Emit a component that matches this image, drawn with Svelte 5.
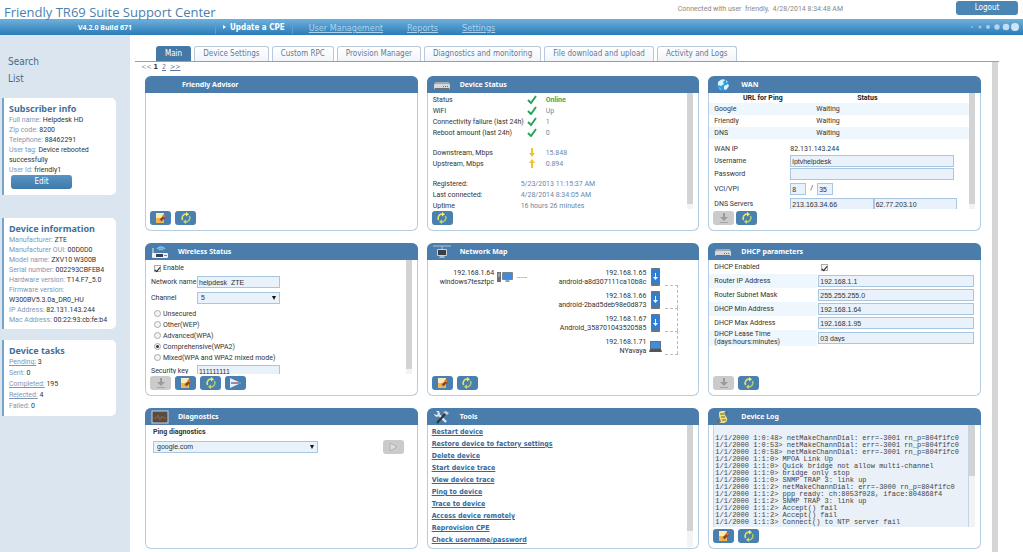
<script lang="ts">
	const nav = ['User Management', 'Reports', 'Settings'];
	const tabs = [
		'Main',
		'Device Settings',
		'Custom RPC',
		'Provision Manager',
		'Diagnostics and monitoring',
		'File download and upload',
		'Activity and Logs'
	];
	let activeTab = $state('Main');

	const subscriber = [
		['Full name', 'Helpdesk HD'],
		['Zip code', '8200'],
		['Telephone', '88462291'],
		['User tag', 'Device rebooted successfully'],
		['User Id', 'friendly1']
	];
	const deviceInfo = [
		['Manufacturer', 'ZTE'],
		['Manufacturer OUI', '00D0D0'],
		['Model name', 'ZXV10 W300B'],
		['Serial number', '002293CBFEB4'],
		['Hardware version', 'T14.F7_5.0'],
		['Firmware version', 'W300BV5.3.0a_DR0_HU'],
		['IP Address', '82.131.143.244'],
		['Mac Address', '00:22:93:cb:fe:b4']
	];
	const tasks = [
		{ name: 'Pending', count: 3, link: true },
		{ name: 'Sent', count: 0, link: false },
		{ name: 'Completed', count: 195, link: true },
		{ name: 'Rejected', count: 4, link: true },
		{ name: 'Failed', count: 0, link: false }
	];

	const checks = [
		['Status', 'Online'],
		['WiFi', 'Up'],
		['Connectivity failure (last 24h)', '1'],
		['Reboot amount (last 24h)', '0']
	];
	const times = [
		['Registered:', '5/23/2013 11:15:37 AM'],
		['Last connected:', '4/28/2014 8:34:05 AM'],
		['Uptime', '16 hours 26 minutes']
	];
	const pings = ['Google', 'Friendly', 'DNS'];

	const security = [
		'Unsecured',
		'Other(WEP)',
		'Advanced(WPA)',
		'Comprehensive(WPA2)',
		'Mixed(WPA and WPA2 mixed mode)'
	];
	let mode = $state('Comprehensive(WPA2)');

	const hosts = [
		{ ip: '192.168.1.65', name: 'android-a8d307111ca10b8c', type: 'phone' },
		{ ip: '192.168.1.66', name: 'android-2bad5deb98e0d873', type: 'phone' },
		{ ip: '192.168.1.67', name: 'Android_358701043520585', type: 'phone' },
		{ ip: '192.168.1.71', name: 'NYavaya', type: 'laptop' }
	];

	const dhcp = [
		['Router IP Address', '192.168.1.1'],
		['Router Subnet Mask', '255.255.255.0'],
		['DHCP Min Address', '192.168.1.64'],
		['DHCP Max Address', '192.168.1.95'],
		['DHCP Lease Time (days:hours:minutes)', '03 days']
	];

	const tools = [
		'Restart device',
		'Restore device to factory settings',
		'Delete device',
		'Start device trace',
		'View device trace',
		'Ping to device',
		'Trace to device',
		'Access device remotely',
		'Reprovision CPE',
		'Check username/password'
	];

	const log = `1/1/2000 1:0:48> netMakeChannDial: err=-3001 rn_p=804f1fc0
1/1/2000 1:0:53> netMakeChannDial: err=-3001 rn_p=804f1fc0
1/1/2000 1:0:58> netMakeChannDial: err=-3001 rn_p=804f1fc0
1/1/2000 1:1:0> MPOA Link Up
1/1/2000 1:1:0> Quick bridge not allow multi-channel
1/1/2000 1:1:0> bridge only stop
1/1/2000 1:1:0> SNMP TRAP 3: link up
1/1/2000 1:1:2> netMakeChannDial: err=-3000 rn_p=804f1fc0
1/1/2000 1:1:2> ppp ready: ch:8053f028, iface:804868f4
1/1/2000 1:1:2> SNMP TRAP 3: link up
1/1/2000 1:1:2> Accept() fail
1/1/2000 1:1:2> Accept() fail
1/1/2000 1:1:3> Connect() to NTP server fail`;
</script>

{#snippet router()}
	<svg width="18" height="14" viewBox="0 0 18 14" aria-hidden="true">
		<path d="M2 4h14l1 3H1z" fill="#a4a9af" />
		<rect x="1" y="6" width="16" height="5" rx="1" fill="#d5d8dc" />
		<rect x="2" y="10" width="14" height="1" fill="#6a7079" />
		<path d="M10 8.500h1M12 8.500h1" stroke="#6a7079" />
		<rect x="14" y="8" width="1" height="1" fill="#c0504d" />
	</svg>
{/snippet}

{#snippet edit()}
	<button class="tool" aria-label="Edit">
		<svg width="13" height="12" viewBox="0 0 13 12">
			<path d="M2 1h8v10H2z" fill="#fce9b5" />
			<path d="M2 6h8v5H2z" fill="#f5b54a" />
			<path d="M5 10l1-3 4-4 2 2-4 4z" fill="#8a4a22" />
			<path d="M9 3l2 2" stroke="#e8742c" stroke-width="2" />
			<path d="M5 10l1-2 1 1z" fill="#fff" />
		</svg>
	</button>
{/snippet}

{#snippet refresh()}
	<button class="tool" aria-label="Refresh">
		<svg width="12" height="12" viewBox="0 0 12 12" fill="none" stroke-width="1.600">
			<path d="M2.600 8A3.900 3.900 0 0 1 6.500 2.200" stroke="#e8e35a" />
			<path d="M9.400 4A3.900 3.900 0 0 1 5.500 9.800" stroke="#a9cf6a" />
			<path d="M6 0l3 2.200L6 4.400z" fill="#f1ec7a" />
			<path d="M6 7.600L3 9.800 6 12z" fill="#c5dc73" />
		</svg>
	</button>
{/snippet}

{#snippet save()}
	<button class="tool off" aria-label="Save" disabled>
		<svg width="12" height="12" viewBox="0 0 12 12">
			<path d="M5 1h2v4h3L6 9 2 5h3z" fill="#9b9b9b" />
			<path d="M2 10.500h8" stroke="#a5a5a5" />
		</svg>
	</button>
{/snippet}

<div class="app">
	<header>
		<div class="top">
			<h1>Friendly TR69 Suite Support Center</h1>
			<span class="who">Connected with user &nbsp;friendly, &nbsp;4/28/2014 8:34:48 AM</span>
			<button class="logout">Logout</button>
		</div>
		<div class="bar">
			<span class="version">V4.2.0 Build 671</span>
			<nav>
				<a class="current" href="#update">Update a CPE</a>
				{#each nav as item}
					<a href="#nav">{item}</a>
				{/each}
			</nav>
			<svg class="dots" width="54" height="12" viewBox="0 0 54 12" fill="#cfe5f5" aria-hidden="true">
				<circle cx="5" cy="6" r="1" opacity=".5" />
				<circle cx="13" cy="6" r="1.5" opacity=".6" />
				<circle cx="21" cy="6" r="2" opacity=".7" />
				<circle cx="30" cy="6" r="2.7" opacity=".8" />
				<circle cx="39" cy="6" r="3.3" opacity=".9" />
				<circle cx="48" cy="6" r="4" />
			</svg>
		</div>
	</header>

	<div class="page">
		<aside>
			<a class="big" href="#search">Search</a>
			<a class="big" href="#list">List</a>

			<section class="card subscriber">
				<h2>Subscriber info</h2>
				{#each subscriber as [name, value]}
					<p><span>{name}:</span> {value}</p>
				{/each}
				<button class="edit">Edit</button>
			</section>

			<section class="card info">
				<h2>Device information</h2>
				{#each deviceInfo as [name, value]}
					<p><span>{name}:</span> {value}</p>
				{/each}
			</section>

			<section class="card tasks">
				<h2>Device tasks</h2>
				{#each tasks as task}
					<p>
						{#if task.link}<a href="#tasks">{task.name}:</a>{:else}<span>{task.name}:</span>{/if}
						{task.count}
					</p>
				{/each}
			</section>
		</aside>

		<main>
			<div class="tabs">
				{#each tabs as tab}
					<button class:active={tab === activeTab} onclick={() => (activeTab = tab)}>{tab}</button>
				{/each}
			</div>

			<div class="content">
				<div class="left">
					<div class="pager">
						<span>&lt;&lt;</span> <b>1</b> <a href="#p2">2</a> <a href="#next">&gt;&gt;</a>
					</div>

					<div class="grid">
						<section class="panel">
							<h3 class="plain">Friendly Advisor</h3>
							<div class="body"></div>
							<div class="actions">{@render edit()}{@render refresh()}</div>
						</section>

						<section class="panel">
							<h3>{@render router()}Device Status</h3>
							<div class="body">
								<div class="scroll">
									<table class="status">
										<tbody>
											{#each checks as [name, value]}
												<tr>
													<th>{name}</th>
													<td class="mark">
														<svg width="10" height="9" viewBox="0 0 10 9">
															<path d="M1 5l3 3L9 1" fill="none" stroke="#27a557" stroke-width="2" />
														</svg>
													</td>
													<td class:online={value === 'Online'}>{value}</td>
												</tr>
											{/each}
										</tbody>
										<tbody>
											<tr>
												<th>Downstream, Mbps</th>
												<td class="mark">
													<svg width="10" height="9" viewBox="0 0 10 9">
														<path d="M4 0h2v5h2L5 9 2 5h2z" fill="#efc52e" />
													</svg>
												</td>
												<td>15.848</td>
											</tr>
											<tr>
												<th>Upstream, Mbps</th>
												<td class="mark">
													<svg width="10" height="9" viewBox="0 0 10 9">
														<path d="M4 9h2V4h2L5 0 2 4h2z" fill="#efc52e" />
													</svg>
												</td>
												<td>0.894</td>
											</tr>
										</tbody>
										<tbody>
											{#each times as [name, value]}
												<tr><th>{name}</th><td colspan="2">{value}</td></tr>
											{/each}
										</tbody>
									</table>
								</div>
								<div class="rail"><i></i></div>
							</div>
							<div class="actions">{@render refresh()}</div>
						</section>

						<section class="panel">
							<h3>
								<svg width="18" height="14" viewBox="0 0 18 14" aria-hidden="true">
									<circle cx="9" cy="7" r="6" fill="#2d9fe0" />
									<path d="M4 4q4-4 7-2L9 4l1 2-3 2-3-1zM10 8l4-2 1 2-3 4-2-1z" fill="#d9f3fb" />
									<path d="M12 2l2 2-2 1zM5 9l2 2-1 1z" fill="#8fd3ee" />
								</svg>WAN
							</h3>
							<div class="body">
								<div class="scroll">
									<table class="pings">
										<thead>
											<tr><th>URL for Ping</th><th>Status</th><th></th></tr>
										</thead>
										<tbody>
											{#each pings as host}
												<tr><td>{host}</td><td>Waiting</td><td></td></tr>
											{/each}
										</tbody>
									</table>
									<div class="form wan">
										<span>WAN IP</span><span class="ip">82.131.143.244</span>
										<label for="user">Username</label><input id="user" value="iptvhelpdesk" />
										<label for="pass">Password</label><input id="pass" />
										<label for="vci">VCI/VPI</label>
										<div class="pair vci">
											<input id="vci" value="8" /><span>/</span><input aria-label="VPI" value="35" />
										</div>
										<label for="dns">DNS Servers</label>
										<div class="pair dns">
											<input id="dns" value="213.163.34.66" /><input aria-label="Second DNS server" value="62.77.203.10" />
										</div>
									</div>
								</div>
								<div class="rail"><i></i></div>
							</div>
							<div class="actions tight">{@render save()}{@render refresh()}</div>
						</section>

						<section class="panel mid">
							<h3>
								<svg width="18" height="14" viewBox="0 0 18 14" aria-hidden="true">
									<path d="M2 3v6" stroke="#e8eef4" />
									<path d="M6 4q4-4 8 0M8 5q2-2 4 0" fill="none" stroke="#7cc6ef" stroke-width="1.4" />
									<rect x="1" y="8" width="16" height="5" rx="1" fill="#eef1f4" />
									<rect x="5" y="9" width="7" height="3" fill="#39424d" />
									<path d="M13 10.500h3" stroke="#7a8592" />
								</svg>Wireless Status
							</h3>
							<div class="body">
								<div class="scroll wifi">
									<label class="enable"><input type="checkbox" checked />Enable</label>
									<div class="line">
										<label for="ssid">Network name</label><input id="ssid" value="helpdesk_ZTE" />
									</div>
									<div class="line channel">
										<label for="channel">Channel</label>
										<div class="select"><select id="channel"><option>5</option></select></div>
									</div>
									<div class="radios">
										{#each security as item}
											<label><input type="radio" value={item} bind:group={mode} />{item}</label>
										{/each}
									</div>
									<div class="line">
										<label for="key">Security key</label><input id="key" value="111111111" />
									</div>
								</div>
								<div class="rail"><i></i></div>
							</div>
							<div class="actions">
								{@render save()}{@render edit()}{@render refresh()}
								<button class="tool" aria-label="Send">
									<svg width="13" height="12" viewBox="0 0 13 12">
										<path d="M1 1l11 5L1 11z" fill="#e9f1f8" />
										<path d="M2 6h3M8 6h3" stroke="#4a80b0" stroke-width="1.500" />
										<path d="M5 6h3" stroke="#c5484f" stroke-width="1.500" />
									</svg>
								</button>
							</div>
						</section>

						<section class="panel mid">
							<h3>
								<svg width="18" height="14" viewBox="0 0 18 14" aria-hidden="true">
									<path d="M0 1h18M9 1v3" stroke="#a9c3da" />
									<rect x="4" y="4" width="10" height="7" rx="1" fill="#c9d0d6" />
									<rect x="5" y="5" width="8" height="5" fill="#3b3f45" />
									<path d="M6 13h6l-1-2H7z" fill="#aeb6be" />
								</svg>Network Map
							</h3>
							<div class="body map">
								<div class="host">
									<p>192.168.1.64<br />windows7tesztpc</p>
									<svg width="17" height="17" viewBox="0 0 17 17">
										<rect x="0" y="4" width="4" height="10" fill="#6a717a" />
										<path d="M1 6h2M1 8h2" stroke="#c8ccd1" />
										<rect x="5" y="4" width="11" height="8" rx="1" fill="#7b858f" />
										<rect x="6" y="5" width="9" height="6" fill="#3f8be0" />
										<path d="M8 14h5l-1-2H9z" fill="#98a1aa" />
									</svg>
									<i></i>
								</div>
								<div class="hosts">
									{#each hosts as host}
										<div class="host">
											<p>{host.ip}<br />{host.name}</p>
											{#if host.type === 'phone'}
												<svg width="13" height="18" viewBox="0 0 13 18">
													<rect x="2" y="0" width="9" height="18" rx="1" fill="#69747f" />
													<rect x="3" y="2" width="7" height="13" fill="#2f7fd6" />
													<path d="M6 5h1v4h2l-2.500 3L4 9h2z" fill="#fff" />
												</svg>
											{:else}
												<svg width="13" height="18" viewBox="0 0 13 18">
													<rect x="1" y="4" width="11" height="8" fill="#68727c" />
													<rect x="2" y="5" width="9" height="6" fill="#3c8de4" />
													<path d="M0 15h13l-1-3H1z" fill="#4c5560" />
												</svg>
											{/if}
											<i></i>
										</div>
									{/each}
								</div>
							</div>
							<div class="actions">{@render edit()}{@render refresh()}</div>
						</section>

						<section class="panel mid">
							<h3>{@render router()}DHCP parameters</h3>
							<div class="body">
								<div class="dhcp">
									<div class="row first">
										<label for="dhcp-on">DHCP Enabled</label><input id="dhcp-on" type="checkbox" checked />
									</div>
									{#each dhcp as [name, value], i}
										<div class="row">
											<label for="dhcp-{i}">{name}</label><input id="dhcp-{i}" {value} />
										</div>
									{/each}
								</div>
							</div>
							<div class="actions">{@render save()}{@render refresh()}</div>
						</section>

						<section class="panel low">
							<h3>
								<svg width="18" height="14" viewBox="0 0 18 14" aria-hidden="true">
									<rect x="1" y="1" width="16" height="12" fill="#5a4a40" stroke="#c9d3dc" />
									<path d="M3 8h3l1-3 2 5 2-4 1 2h3" fill="none" stroke="#8f6750" />
								</svg>Diagnostics
							</h3>
							<div class="body diag">
								<label for="ping">Ping diagnostics</label>
								<div class="ping">
									<div class="select"><select id="ping"><option>google.com</option></select></div>
									<button class="tool off" aria-label="Run" disabled>
										<svg width="12" height="12" viewBox="0 0 12 12">
											<path d="M3 2l7 4-7 4z" fill="#dedede" stroke="#b2b2b2" />
										</svg>
									</button>
								</div>
							</div>
						</section>

						<section class="panel low">
							<h3>
								<svg width="18" height="14" viewBox="0 0 18 14" aria-hidden="true">
									<path d="M6 5l7 7" stroke="#dfe5ea" stroke-width="2.400" />
									<path d="M3 1l2 2-1 2-3-1a3 3 0 0 0 5 2l1-2-1-3z" fill="#dfe5ea" />
									<path d="M4 13l8-9" stroke="#2f3338" stroke-width="2" />
									<path d="M10 2l4 3 2-2-3-2z" fill="#c8ced4" />
								</svg>Tools
							</h3>
							<div class="body tall">
								<ul class="scroll">
									{#each tools as tool}
										<li><a href="#tools">{tool}</a></li>
									{/each}
								</ul>
								<div class="rail"><i></i></div>
							</div>
						</section>

						<section class="panel low">
							<h3>
								<svg width="18" height="14" viewBox="0 0 18 14" aria-hidden="true">
									<path d="M5 3q0-2 3-2h4q-3 1-1 4l2 3q1 4-3 5H5q3-1 1-4L5 6z" fill="#f3df7a" />
									<path d="M6 4h4M7 7h4M8 10h4M12 1q2 1 1 3M5 13q-2-1-1-3" fill="none" stroke="#6c6334" />
								</svg>Device Log
							</h3>
							<div class="body">
								<pre class="scroll">{log}</pre>
								<div class="rail log"><i></i></div>
							</div>
							<div class="actions">{@render edit()}{@render refresh()}</div>
						</section>
					</div>
				</div>
				<div class="pagebar"></div>
			</div>
		</main>
	</div>
</div>

<style>
	:global(body) {
		margin: 0;
		background: #fff;
	}

	.app {
		display: flex;
		flex-direction: column;
		height: 100vh;
		overflow: hidden;
		color: #333;
		font: 7px/10px Roboto, 'Liberation Sans', sans-serif;
	}

	.app :global(*) {
		box-sizing: border-box;
	}

	h1, h2, h3, p, ul, pre {
		margin: 0;
		padding: 0;
	}

	svg {
		display: block;
		flex: none;
	}

	button, input, select {
		font: inherit;
		margin: 0;
		padding: 0;
	}

	/* header */
	.top {
		display: flex;
		height: 19px;
	}

	h1 {
		flex: 1;
		padding: 4px 0 0 4px;
		color: #4a7fae;
		font: 13px/17px 'Open Sans', sans-serif;
		white-space: nowrap;
	}

	.who {
		padding-top: 4px;
		margin-right: 113px;
		color: #888;
	}

	.logout {
		width: 62px;
		height: 14px;
		margin: 1px 5px 0 0;
		border: 0;
		border-radius: 3px;
		background: #4a85b3;
		color: #fff;
		font: 8px/14px 'DejaVu Sans Condensed', sans-serif;
	}

	.bar {
		display: flex;
		align-items: center;
		height: 16px;
		background: linear-gradient(#6fb0dc, #2a7cb8);
	}

	.version {
		width: 215px;
		padding: 2px 0 0 78px;
		color: #fff;
		font: bold 7px/12px 'Noto Sans', sans-serif;
	}

	nav {
		display: flex;
		flex: 1;
		gap: 24px;
		padding-top: 2px;
		font: 9px/12px 'DejaVu Sans Condensed', sans-serif;
	}

	nav a {
		color: #a9d3f0;
	}

	nav .current {
		padding: 0 7px;
		border: solid #5c9fd0;
		border-width: 0 1px;
		margin-right: -8px;
		color: #fff;
		font-weight: bold;
		font-size: 8px;
		text-decoration: none;
	}

	nav .current::before {
		content: '';
		display: inline-block;
		margin-right: 4px;
		border: solid transparent;
		border-width: 2px 0 2px 3px;
		border-left-color: #fff;
		vertical-align: 1px;
	}

	.dots {
		margin-right: 2px;
	}

	/* sidebar */
	.page {
		display: flex;
		flex: 1;
		min-height: 0;
	}

	aside {
		flex: none;
		width: 130px;
		padding: 18px 14px 0 2px;
		background: #dbe5ef;
	}

	.big {
		display: block;
		padding-left: 6px;
		color: #46698c;
		font: 10px/17px 'DejaVu Sans Condensed', sans-serif;
		text-decoration: none;
	}

	.card {
		padding: 5px 4px 4px 5px;
		border-left: 2px solid #76a5cc;
		border-radius: 0 5px 5px 0;
		background: #fff;
		color: #333;
	}

	.card h2 {
		color: #43709b;
		font: bold 9px/12px 'Noto Sans', sans-serif;
	}

	.card span, .card a {
		color: #7f97b5;
	}

	.subscriber {
		margin-top: 11px;
		padding-bottom: 6px;
	}

	.info {
		margin-top: 23px;
	}

	.tasks {
		margin-top: 11px;
		line-height: 11px;
	}

	.edit {
		display: block;
		width: 61px;
		height: 14px;
		margin: 0 0 0 2px;
		border: 0;
		border-radius: 3px;
		background: linear-gradient(#5a94c4, #3f79a8);
		color: #fff;
		font: 8px/14px 'DejaVu Sans Condensed', sans-serif;
	}

	/* tabs */
	main {
		display: flex;
		flex-direction: column;
		flex: 1;
		min-width: 0;
		padding: 11px 24px 0 5px;
	}

	.tabs {
		display: flex;
		gap: 3px;
		padding-left: 21px;
		border-bottom: 1px solid #86a3c3;
	}

	.tabs button {
		height: 15px;
		padding: 0 8px;
		border: 1px solid #b9c9da;
		border-bottom: 0;
		border-radius: 3px 3px 0 0;
		background: linear-gradient(#fff, #f1f5fa);
		color: #607a9b;
		font: 8px/14px 'DejaVu Sans Condensed', sans-serif;
		white-space: nowrap;
	}

	.tabs .active {
		border-color: #4678a5;
		background: #4678a5;
		color: #fff;
	}

	.content {
		display: flex;
		flex: 1;
		min-height: 0;
	}

	.left {
		flex: 1;
		min-width: 0;
		padding: 0 11px 0 10px;
	}

	.pagebar {
		width: 6px;
		margin-right: 1px;
		background: #d6d6d6;
	}

	.pager {
		height: 14px;
		margin-left: -4px;
		color: #8494a8;
		font: 7px/11px 'DejaVu Sans Condensed', sans-serif;
	}

	.pager b {
		color: #333;
	}

	.pager b, .pager a {
		margin-right: 2px;
	}

	.pager a {
		color: #5d7a9e;
	}

	/* panels */
	.grid {
		display: grid;
		grid-template-columns: repeat(3, 1fr);
		gap: 12px 9px;
	}

	.panel {
		min-width: 0;
		padding-bottom: 5px;
		border: 1px solid #b5cde2;
		border-top: 0;
		border-radius: 6px;
	}

	h3 {
		display: flex;
		align-items: center;
		gap: 9px;
		height: 17px;
		margin: 0 -1px;
		padding-left: 6px;
		border-radius: 6px 6px 0 0;
		background: #4a7dab;
		color: #fff;
		font: bold 7px/16px 'Noto Sans', sans-serif;
	}

	h3.plain {
		padding-left: 37px;
	}

	.body {
		display: flex;
		height: 116px;
		padding-right: 5px;
	}

	.mid .body {
		height: 114px;
	}

	.low .body {
		height: 102px;
	}

	.low .body.tall {
		height: 122px;
		margin-bottom: -4px;
	}

	.scroll {
		flex: 1;
		min-width: 0;
		overflow: hidden;
	}

	.rail {
		flex: none;
		width: 6px;
		background: #f3f3f3;
	}

	.rail i {
		display: block;
		height: 96%;
		background: #d3d3d3;
	}

	.tall .rail i {
		height: 87%;
	}

	.rail.log i {
		height: 50%;
	}

	.actions {
		display: flex;
		gap: 4px;
		margin: 2px 0 0 4px;
	}

	.actions.tight {
		gap: 2px;
	}

	.tool {
		display: flex;
		align-items: center;
		justify-content: center;
		width: 21px;
		height: 14px;
		border: 0;
		border-radius: 3px;
		background: #4a80b0;
	}

	.tool.off {
		background: #cbcbcb;
	}

	input:not([type]), select {
		height: 12px;
		min-width: 0;
		border: 1px solid #a9c6e0;
		border-radius: 0;
		outline: 0;
		background: #e9f1fa;
		color: #333;
		font: 7px/10px 'Liberation Sans', sans-serif;
	}

	input:not([type]) {
		padding: 0 1px;
	}

	.select {
		position: relative;
	}

	.select::after {
		content: '';
		position: absolute;
		top: 4px;
		right: 4px;
		border: solid transparent;
		border-width: 4px 2px 0;
		border-top-color: #111;
		pointer-events: none;
	}

	select {
		appearance: none;
		display: block;
		width: 100%;
		padding-left: 3px;
	}

	input[type='checkbox'], input[type='radio'] {
		appearance: none;
		display: grid;
		place-items: center;
		flex: none;
		width: 7px;
		height: 7px;
		border: 1px solid #aaa;
		background: #f4f4f4;
	}

	input[type='radio'] {
		border-radius: 50%;
	}

	input[type='radio']:checked::after {
		content: '';
		width: 3px;
		height: 3px;
		border-radius: 50%;
		background: #333;
	}

	input[type='checkbox']:checked::after {
		content: '';
		width: 2px;
		height: 5px;
		border: solid #222;
		border-width: 0 1px 1px 0;
		transform: rotate(40deg);
	}

	/* device status */
	table {
		width: 100%;
		border-collapse: collapse;
		table-layout: fixed;
	}

	td, th {
		padding: 0;
		text-align: left;
		white-space: nowrap;
	}

	.status {
		margin-top: 1px;
	}

	.status th {
		width: 93px;
		height: 11px;
		padding-left: 5px;
		font-weight: normal;
	}

	.status td {
		color: #6f86a6;
	}

	.status .mark {
		width: 25px;
		padding-left: 6px;
	}

	.status td.online {
		color: #2fae55;
		font-weight: bold;
	}

	.status tbody + tbody::before {
		content: '';
		display: block;
		height: 9px;
	}

	/* wan */
	.pings th {
		height: 9px;
		width: 102px;
		color: #222;
		text-align: center;
	}

	.pings th:first-child {
		width: 107px;
	}

	.pings th:last-child {
		width: auto;
	}

	.pings td {
		height: 12px;
	}

	.pings td:first-child {
		padding-left: 5px;
	}

	.pings tbody tr:nth-child(odd) {
		background: #eef6fe;
	}

	.form {
		display: grid;
		grid-template-columns: 76px minmax(0, 1fr);
		align-items: center;
		row-gap: 1px;
		margin: 5px 12px 0 5px;
	}

	.wan > input {
		width: 98%;
	}

	.pair {
		display: flex;
	}

	.vci {
		gap: 4px;
		margin: 2px 0;
	}

	.vci input {
		width: 16px;
	}

	.dns input {
		flex: 1;
	}

	/* wireless */
	.wifi label {
		display: flex;
		align-items: center;
		gap: 2px;
	}

	.wifi .enable {
		margin: 3px 0 3px 8px;
		height: 10px;
	}

	.line {
		display: grid;
		grid-template-columns: 46px 83px;
		align-items: center;
		padding-left: 5px;
		white-space: nowrap;
	}

	.channel {
		margin: 4px 0;
	}

	.radios {
		margin-bottom: 2px;
		padding-left: 8px;
	}

	.radios label {
		height: 11px;
	}

	/* network map */
	.map {
		justify-content: space-between;
		padding: 8px 20px 0 12px;
	}

	.host {
		display: flex;
		align-items: flex-start;
		justify-content: flex-end;
		gap: 3px;
		height: 23px;
	}

	.host p {
		margin-top: 1px;
		line-height: 9px;
		text-align: right;
		white-space: nowrap;
	}

	.host i {
		width: 10px;
		margin-top: 9px;
		border-top: 1px dashed #bbb;
	}

	.hosts .host i {
		align-self: stretch;
		width: 13px;
		margin: 17px 0 -17px;
		border-right: 1px dashed #bbb;
	}

	.hosts .host:last-child i {
		height: 1px;
		border-right: 0;
	}

	/* dhcp */
	.dhcp {
		flex: 1;
	}

	.row {
		display: flex;
		align-items: center;
		min-height: 14px;
	}

	.row.first {
		min-height: 13px;
	}

	.row label {
		flex: none;
		width: 108px;
		padding: 2px 20px 2px 5px;
		margin-right: 1px;
		line-height: 10px;
	}

	.row:last-child label {
		padding-block: 0;
		line-height: 8px;
	}

	.row:nth-child(even) label {
		background: #eef6fe;
	}

	.row input:not([type]) {
		flex: 1;
		margin-right: 1px;
	}

	.row input[type='checkbox'] {
		margin-left: 3px;
	}

	/* diagnostics */
	.diag {
		flex-direction: column;
		gap: 3px;
		padding: 2px 13px 0 7px;
		font-weight: bold;
	}

	.ping {
		display: flex;
		align-items: center;
		justify-content: space-between;
	}

	.ping .select {
		width: 165px;
	}

	/* tools */
	ul {
		padding: 1px 0 0 4px;
		list-style: none;
	}

	li {
		font: bold 7px/12px 'DejaVu Sans Condensed', sans-serif;
	}

	li a {
		color: #35699a;
	}

	/* log */
	pre {
		margin-left: 4px;
		padding: 10px 0 0 1px;
		border: 1px solid #c3d6e8;
		border-width: 0 1px;
		background: #e9f0f7;
		color: #444;
		font: 7px/7px 'Liberation Mono', monospace;
	}
</style>
